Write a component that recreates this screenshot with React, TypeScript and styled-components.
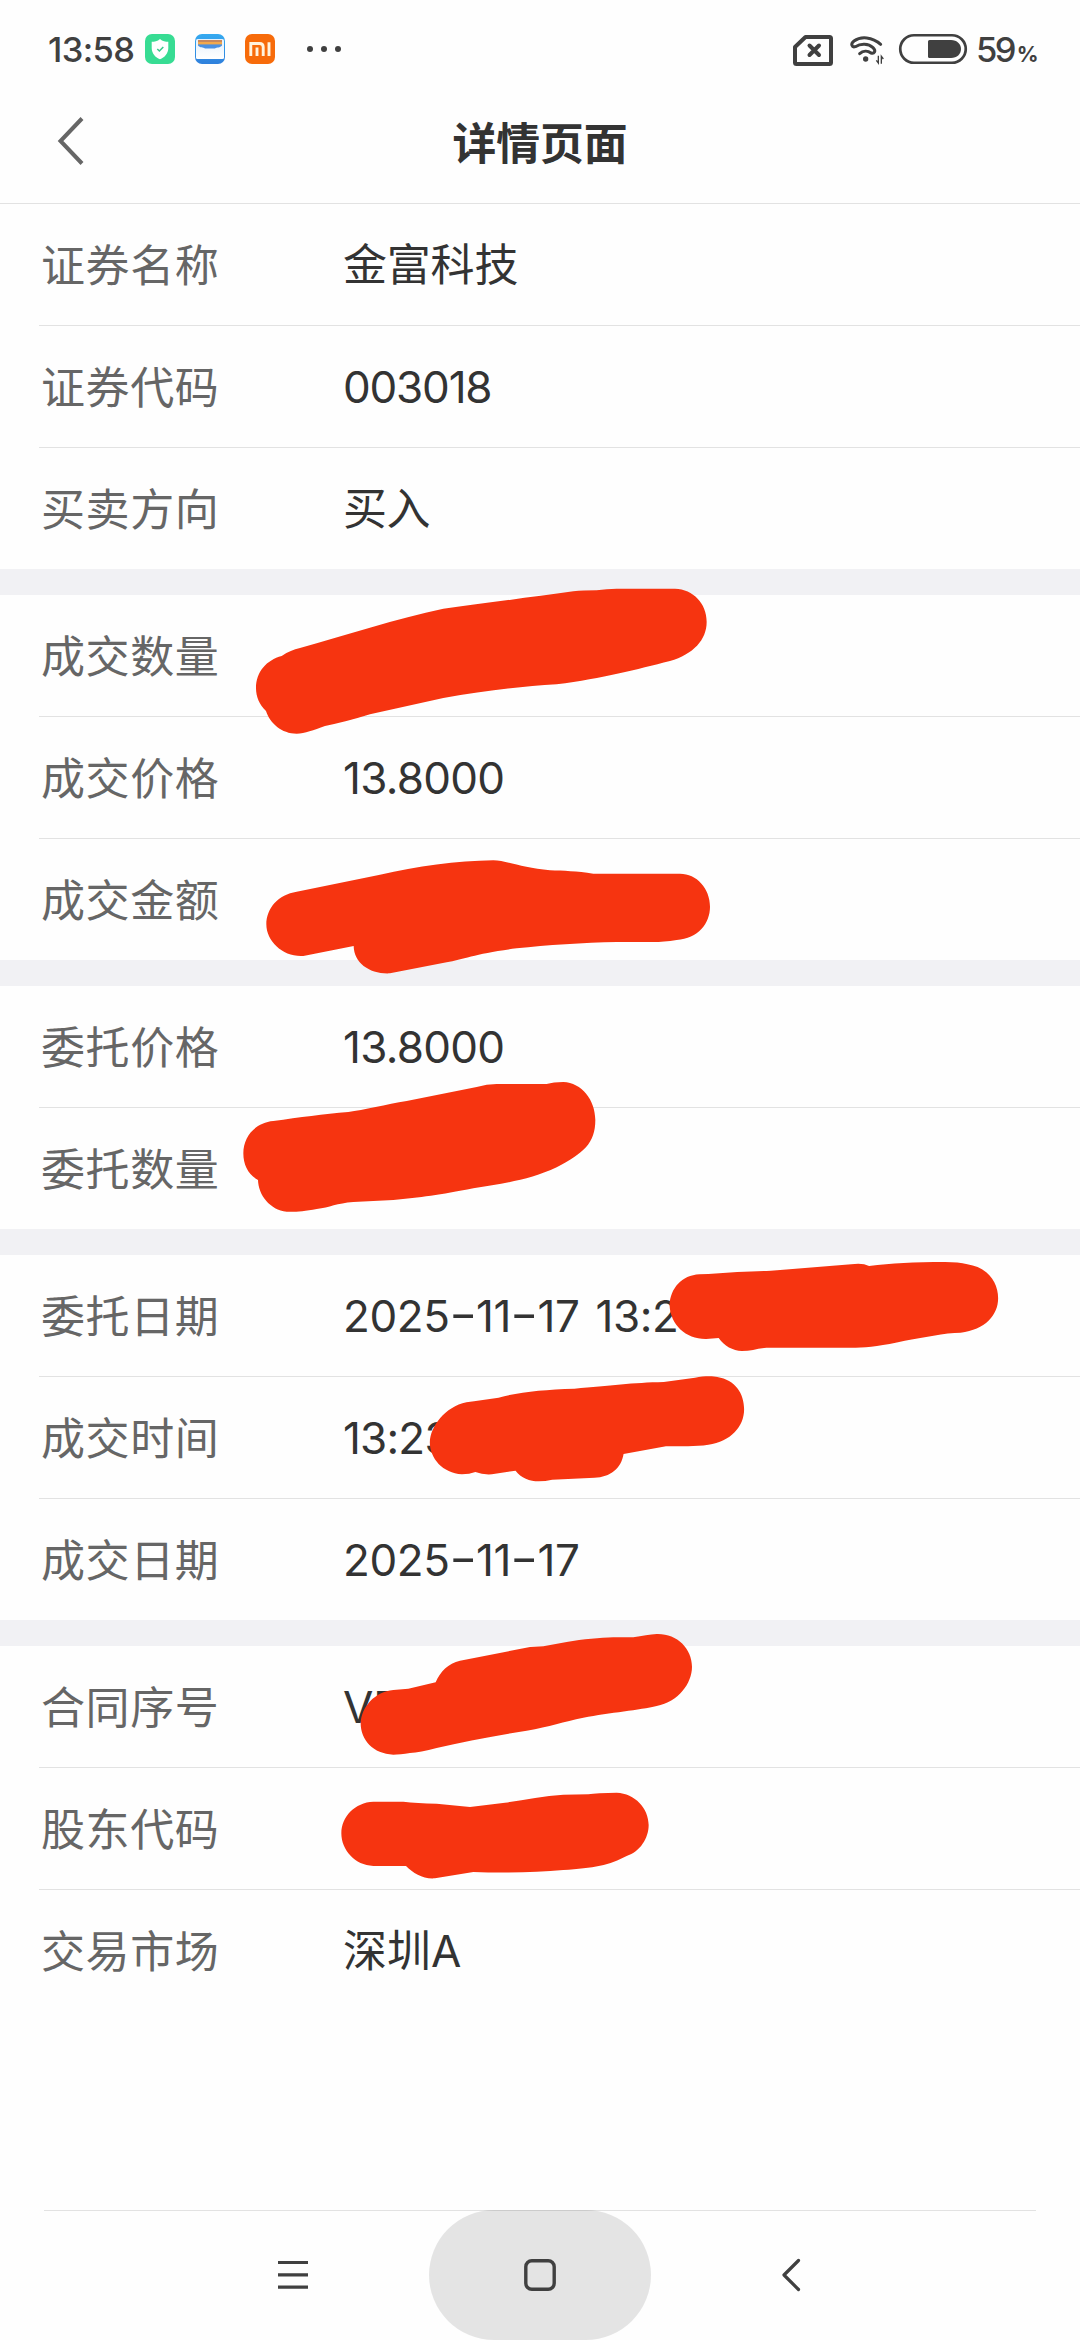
import React from "react";
import styled, { createGlobalStyle } from "styled-components";

const GlobalStyle = createGlobalStyle`
  * { box-sizing: border-box; }
  html, body { margin: 0; padding: 0; background: #fefefe; }
  body { font-family: Inter, "Noto Sans CJK SC", sans-serif; }
`;

const Page = styled.div`
  position: relative;
  display: flex;
  flex-direction: column;
  width: 1080px;
  height: 2340px;
  overflow: hidden;
  background: #fefefe;
`;

const StatusBar = styled.div`
  display: flex;
  align-items: center;
  justify-content: space-between;
  height: 98px;
  padding: 0 47px 0 48px;
  color: #404040;
`;

const StatusSide = styled.div`
  display: flex;
  align-items: center;
`;

const Clock = styled.span`
  width: 97px;
  padding-top: 1px;
  font-size: 34.5px;
  line-height: 40px;
  font-weight: 500;
  letter-spacing: -0.6px;
  white-space: nowrap;
`;

const Icon = styled.svg<{ $gap?: number }>`
  display: block;
  flex: none;
  margin-right: ${(p) => p.$gap ?? 0}px;
  overflow: visible;
`;

const Battery = styled.span`
  width: 57px;
  height: 40px;
  padding-top: 1px;
  font-size: 34.5px;
  line-height: 40px;
  font-weight: 500;
  letter-spacing: -2.6px;
  white-space: nowrap;
`;

const Percent = styled.span`
  margin-left: 3px;
  font-size: 21.5px;
  line-height: 1;
  font-weight: 700;
  letter-spacing: 0;
`;

const Header = styled.header`
  display: grid;
  grid-template-columns: 120px 1fr 120px;
  align-items: center;
  height: 106px;
  padding-bottom: 19px;
  border-bottom: 1px solid #e2e2e2;
`;

const BackButton = styled.button`
  display: flex;
  align-items: center;
  height: 60px;
  padding: 0 0 0 57px;
  border: 0;
  background: none;
`;

const Title = styled.h1`
  margin: 0;
  text-align: center;
  font-family: "Noto Sans CJK SC", sans-serif;
  font-size: 43.8px;
  line-height: 60px;
  font-weight: 700;
  color: #333;
`;

const Group = styled.section`
  display: flex;
  flex-direction: column;
  & + & {
    border-top: 26px solid #f1f1f4;
  }
`;

const Row = styled.div`
  display: flex;
  align-items: center;
  height: 121px;
  margin-left: 39px;
  & + & {
    height: 122px;
    border-top: 1px solid #e2e2e2;
  }
`;

const Label = styled.span`
  width: 304px;
  padding: 0 0 4px 2px;
  font-family: "Noto Sans CJK SC", sans-serif;
  font-size: 44px;
  line-height: 64px;
  letter-spacing: 0.6px;
  color: #666;
`;

const Value = styled.span<{ $tracking?: number }>`
  font-size: 44px;
  line-height: 64px;
  letter-spacing: ${(p) => p.$tracking ?? 0}px;
  word-spacing: 4px;
  color: #333;
  white-space: nowrap;
`;

const Dash = styled.span`
  display: inline-block;
  margin: 0 3.3px;
  font-feature-settings: "case";
  transform: scaleX(1.4);
`;

const NavBar = styled.nav`
  display: flex;
  justify-content: center;
  height: 130px;
  margin: auto 44px 0;
  box-shadow: inset 0 1px 0 #e2e2e2;
`;

const NavButton = styled.button<{ $active?: boolean }>`
  display: flex;
  align-items: center;
  justify-content: center;
  width: ${(p) => (p.$active ? 222 : 272)}px;
  height: 130px;
  padding: 0;
  border: 0;
  border-radius: 65px;
  background: ${(p) => (p.$active ? "rgba(0, 0, 0, 0.1)" : "transparent")};
`;

const Marker = styled.svg`
  position: absolute;
  inset: 0;
  pointer-events: none;
  fill: #f63410;
`;

type Field = { label: string; value: string; tracking?: number };

const groups: Field[][] = [
  [
    { label: "证券名称", value: "金富科技", tracking: -0.2 },
    { label: "证券代码", value: "003018", tracking: -1.2 },
    { label: "买卖方向", value: "买入", tracking: -0.4 },
  ],
  [
    { label: "成交数量", value: "" },
    { label: "成交价格", value: "13.8000", tracking: -0.7 },
    { label: "成交金额", value: "" },
  ],
  [
    { label: "委托价格", value: "13.8000", tracking: -0.7 },
    { label: "委托数量", value: "" },
  ],
  [
    { label: "委托日期", value: "2025-11-17 13:2", tracking: -0.4 },
    { label: "成交时间", value: "13:23", tracking: -0.8 },
    { label: "成交日期", value: "2025-11-17", tracking: -0.4 },
  ],
  [
    { label: "合同序号", value: "VF" },
    { label: "股东代码", value: "" },
    { label: "交易市场", value: "深圳A", tracking: 0 },
  ],
];

const strokes = [
  {
    place: "translate(230 560) scale(0.33333)",
    d: "M78 385C78 335 110 300 155 288C175 275 190 268 210 264C350 225 500 175 640 146C760 130 900 112 1030 94Q1060 91 1100 91Q1130 86 1160 86L1335 86C1390 88 1430 130 1430 185C1430 240 1390 282 1320 303C1220 328 1120 355 980 373C870 380 760 392 640 414L420 463Q350 485 285 498C250 510 225 521 200 521C155 521 120 490 108 453C88 435 78 410 78 385Z",
  },
  {
    place: "translate(230 840) scale(0.33333)",
    d: "M109 253C109 205 145 163 200 155L450 104C560 80 680 62 790 61C830 62 880 85 960 91C1000 92 1040 94 1090 101L1350 101C1400 101 1440 145 1440 200C1440 250 1405 295 1340 300Q1300 306 1270 306L1160 306C1060 308 950 315 860 325C740 340 700 358 650 367L480 400C420 403 372 370 371 318L220 348C160 352 109 305 109 253Z",
  },
  {
    place: "translate(220 1060) scale(0.33333)",
    d: "M70 280C70 230 105 188 160 183C240 172 310 162 385 156C430 150 500 133 560 123L770 81Q800 72 830 72L980 72Q1000 66 1030 66C1085 68 1126 120 1126 180C1126 250 1090 280 1010 322C930 360 850 370 760 385C660 405 600 413 520 420L400 426C350 430 330 442 290 447C250 455 220 456 200 455C150 450 115 405 114 360C85 345 70 315 70 280Z",
  },
  {
    place: "translate(320 1240) scale(0.44643 0.33333)",
    d: "M783 195C785 145 810 106 850 103L870 102C920 96 970 95 1010 92L1190 73Q1215 68 1230 78C1280 70 1330 66 1400 66Q1430 66 1450 73C1495 82 1519 125 1519 175C1519 225 1490 270 1435 278C1400 278 1350 293 1310 302C1260 317 1230 322 1200 323L1000 323C980 325 965 333 945 333C925 332 905 318 893 294L865 297C820 298 785 255 783 195Z",
  },
  {
    place: "translate(320 1240) scale(0.44643 0.33333)",
    d: "M246 607C247 560 280 500 328 487L345 484L400 473C450 455 500 449 570 446C650 437 700 428 770 426L840 413C860 408 880 408 890 411C930 420 950 460 950 508C950 560 920 605 870 614C840 620 810 618 775 619L680 642C675 685 650 712 615 713L520 719Q505 724 490 724C470 724 450 714 438 692L385 703Q365 705 348 696Q335 703 318 703C275 700 246 655 246 607Z",
  },
  {
    place: "translate(320 1520) scale(0.33333)",
    d: "M122 610C124 560 165 515 220 510L265 506L347 487C360 455 385 430 420 422L630 381L670 379L740 366C790 357 840 354 880 352L940 352Q980 344 1010 342C1070 340 1116 385 1116 440C1116 490 1075 545 1010 558C960 570 870 578 790 593C730 605 690 620 620 632C520 648 430 665 350 684Q300 697 270 699Q240 704 220 704C160 702 122 660 122 610Z",
  },
  {
    place: "translate(320 1520) scale(0.33333)",
    d: "M64 940C64 890 105 847 160 845L250 845Q290 850 350 851L450 861L555 848C610 840 670 828 730 824L805 823Q830 818 890 818C945 820 986 865 986 915C986 955 960 995 920 1008C870 1035 820 1045 730 1050C650 1057 560 1060 460 1056L345 1075C310 1078 280 1060 258 1038L160 1038C105 1036 64 990 64 940Z",
  },
];

function ShieldIcon() {
  return (
    <Icon $gap={20} width="30" height="30" viewBox="0 0 30 30">
      <rect width="30" height="30" rx="7" fill="#37dc93" />
      <path d="M15 5C12.5 7.3 9.5 7.8 6.7 7.8V14C6.7 19.5 10.5 23.500 15 25.300C19.500 23.500 23.300 19.500 23.300 14V7.800C20.500 7.800 17.500 7.300 15 5Z" fill="#fff" />
      <path d="M12.300 15L14.400 17L18.300 12.900" fill="none" stroke="#37c98b" strokeWidth="1.500" />
    </Icon>
  );
}

function WalletIcon() {
  return (
    <Icon $gap={20} width="30" height="30" viewBox="0 0 30 30">
      <defs>
        <linearGradient id="walletBack" x1="0" y1="0" x2="0" y2="1">
          <stop offset="0" stopColor="#35aaf0" />
          <stop offset="1" stopColor="#2f80dc" />
        </linearGradient>
        <linearGradient id="walletFront" x1="0" y1="0" x2="0" y2="1">
          <stop offset="0" stopColor="#e4f0fb" />
          <stop offset="1" stopColor="#fff" />
        </linearGradient>
      </defs>
      <rect width="30" height="30" rx="7" fill="url(#walletBack)" />
      <rect x="1" y="5" width="28" height="20" rx="1.500" fill="url(#walletFront)" />
      <path d="M3 6H27V11.500C25 14 22 13 20 14.500H10C8 13 5 14 3 11.500Z" fill="#4a90e2" />
      <path d="M3 6H27V8H3Z" fill="#c8875c" />
      <path d="M3 8H27V10.400H3Z" fill="#f2a84c" />
    </Icon>
  );
}

function MiIcon() {
  return (
    <Icon $gap={31.500} width="30" height="30" viewBox="0 0 30 30">
      <rect width="30" height="30" rx="7" fill="#f76b0a" />
      <path d="M5.800 22V9.500H14.500Q18.200 9.500 18.200 13V22M12 13.500V22M24 8.300V22" fill="none" stroke="#fff3dd" strokeWidth="2.900" />
    </Icon>
  );
}

function StatusDots() {
  return (
    <Icon width="34" height="6" viewBox="0 0 34 6" fill="#404040">
      <circle cx="3" cy="3" r="3" />
      <circle cx="17" cy="3" r="3" />
      <circle cx="31" cy="3" r="3" />
    </Icon>
  );
}

function NoSimIcon() {
  return (
    <Icon $gap={17} width="40" height="31" viewBox="0 -1 40 31" fill="none" stroke="#404040">
      <path d="M12.500 2H36.500Q38 2 38 3.500V27.500Q38 29 36.500 29H3.500Q2 29 2 27.500V12Z" strokeWidth="4" strokeLinejoin="round" />
      <path d="M16.500 10.500L26 20M26 10.500L16.500 20" strokeWidth="4" strokeLinecap="round" />
    </Icon>
  );
}

function WifiIcon() {
  return (
    <Icon $gap={15} width="34" height="27" viewBox="270 106 102 81" fill="none" stroke="#404040">
      <path
        d="M362 131C337 108 302 106 282 121C270 130 276 141 286 138C302 128 325 128 339 141C350 152 342 160 333 157C323 149 309 150 299 159"
        strokeWidth="9"
        strokeLinecap="round"
        strokeLinejoin="round"
      />
      <circle cx="317" cy="175" r="8" fill="#404040" stroke="none" />
      <path d="M355 165V187L349 179M364 189V167L370 175" strokeWidth="4" />
    </Icon>
  );
}

function BatteryIcon() {
  return (
    <Icon $gap={9} width="68" height="30" viewBox="0 0 68 30">
      <rect x="1.250" y="1.250" width="65.500" height="27.500" rx="13.750" fill="none" stroke="#404040" strokeWidth="2.700" />
      <path d="M30.500 6H52C58 6 62 10 62 15S58 24 52 24H30.500Q29 24 29 22.500V7.500Q29 6 30.500 6Z" fill="#404040" />
    </Icon>
  );
}

function ValueText({ text }: { text: string }) {
  return (
    <>
      {text.split("-").map((part, i) => (
        <React.Fragment key={i}>
          {i > 0 && <Dash>-</Dash>}
          {part}
        </React.Fragment>
      ))}
    </>
  );
}

export default function App() {
  return (
    <Page>
      <GlobalStyle />
      <StatusBar>
        <StatusSide>
          <Clock>13:58</Clock>
          <ShieldIcon />
          <WalletIcon />
          <MiIcon />
          <StatusDots />
        </StatusSide>
        <StatusSide>
          <NoSimIcon />
          <WifiIcon />
          <BatteryIcon />
          <Battery>
            59<Percent>%</Percent>
          </Battery>
        </StatusSide>
      </StatusBar>
      <Header>
        <BackButton aria-label="返回">
          <Icon width="28" height="48" viewBox="0 0 28 48">
            <path d="M25 1.500L3.500 24L25 46.500" fill="none" stroke="#666" strokeWidth="4" />
          </Icon>
        </BackButton>
        <Title>详情页面</Title>
      </Header>
      <main>
        {groups.map((fields, i) => (
          <Group key={i}>
            {fields.map((f) => (
              <Row key={f.label}>
                <Label>{f.label}</Label>
                <Value $tracking={f.tracking}>
                  <ValueText text={f.value} />
                </Value>
              </Row>
            ))}
          </Group>
        ))}
      </main>
      <NavBar>
        <NavButton aria-label="菜单">
          <Icon width="30" height="32" viewBox="0 0 30 32">
            <path d="M0 3.500H30M0 15.800H30M0 28.100H30" stroke="#404040" strokeWidth="3.200" />
          </Icon>
        </NavButton>
        <NavButton $active aria-label="主页">
          <Icon width="32" height="32" viewBox="0 0 32 32">
            <rect x="1.800" y="1.800" width="28.400" height="28.400" rx="6" fill="none" stroke="#404040" strokeWidth="3.400" />
          </Icon>
        </NavButton>
        <NavButton aria-label="后退">
          <Icon width="28" height="32" viewBox="-8 0 28 32">
            <path d="M17.500 1.500L3 16L17.500 30.500" fill="none" stroke="#404040" strokeWidth="3.200" strokeLinecap="round" strokeLinejoin="round" />
          </Icon>
        </NavButton>
      </NavBar>
      <Marker width="1080" height="2340" viewBox="0 0 1080 2340">
        {strokes.map((s, i) => (
          <path key={i} transform={s.place} d={s.d} />
        ))}
      </Marker>
    </Page>
  );
}
